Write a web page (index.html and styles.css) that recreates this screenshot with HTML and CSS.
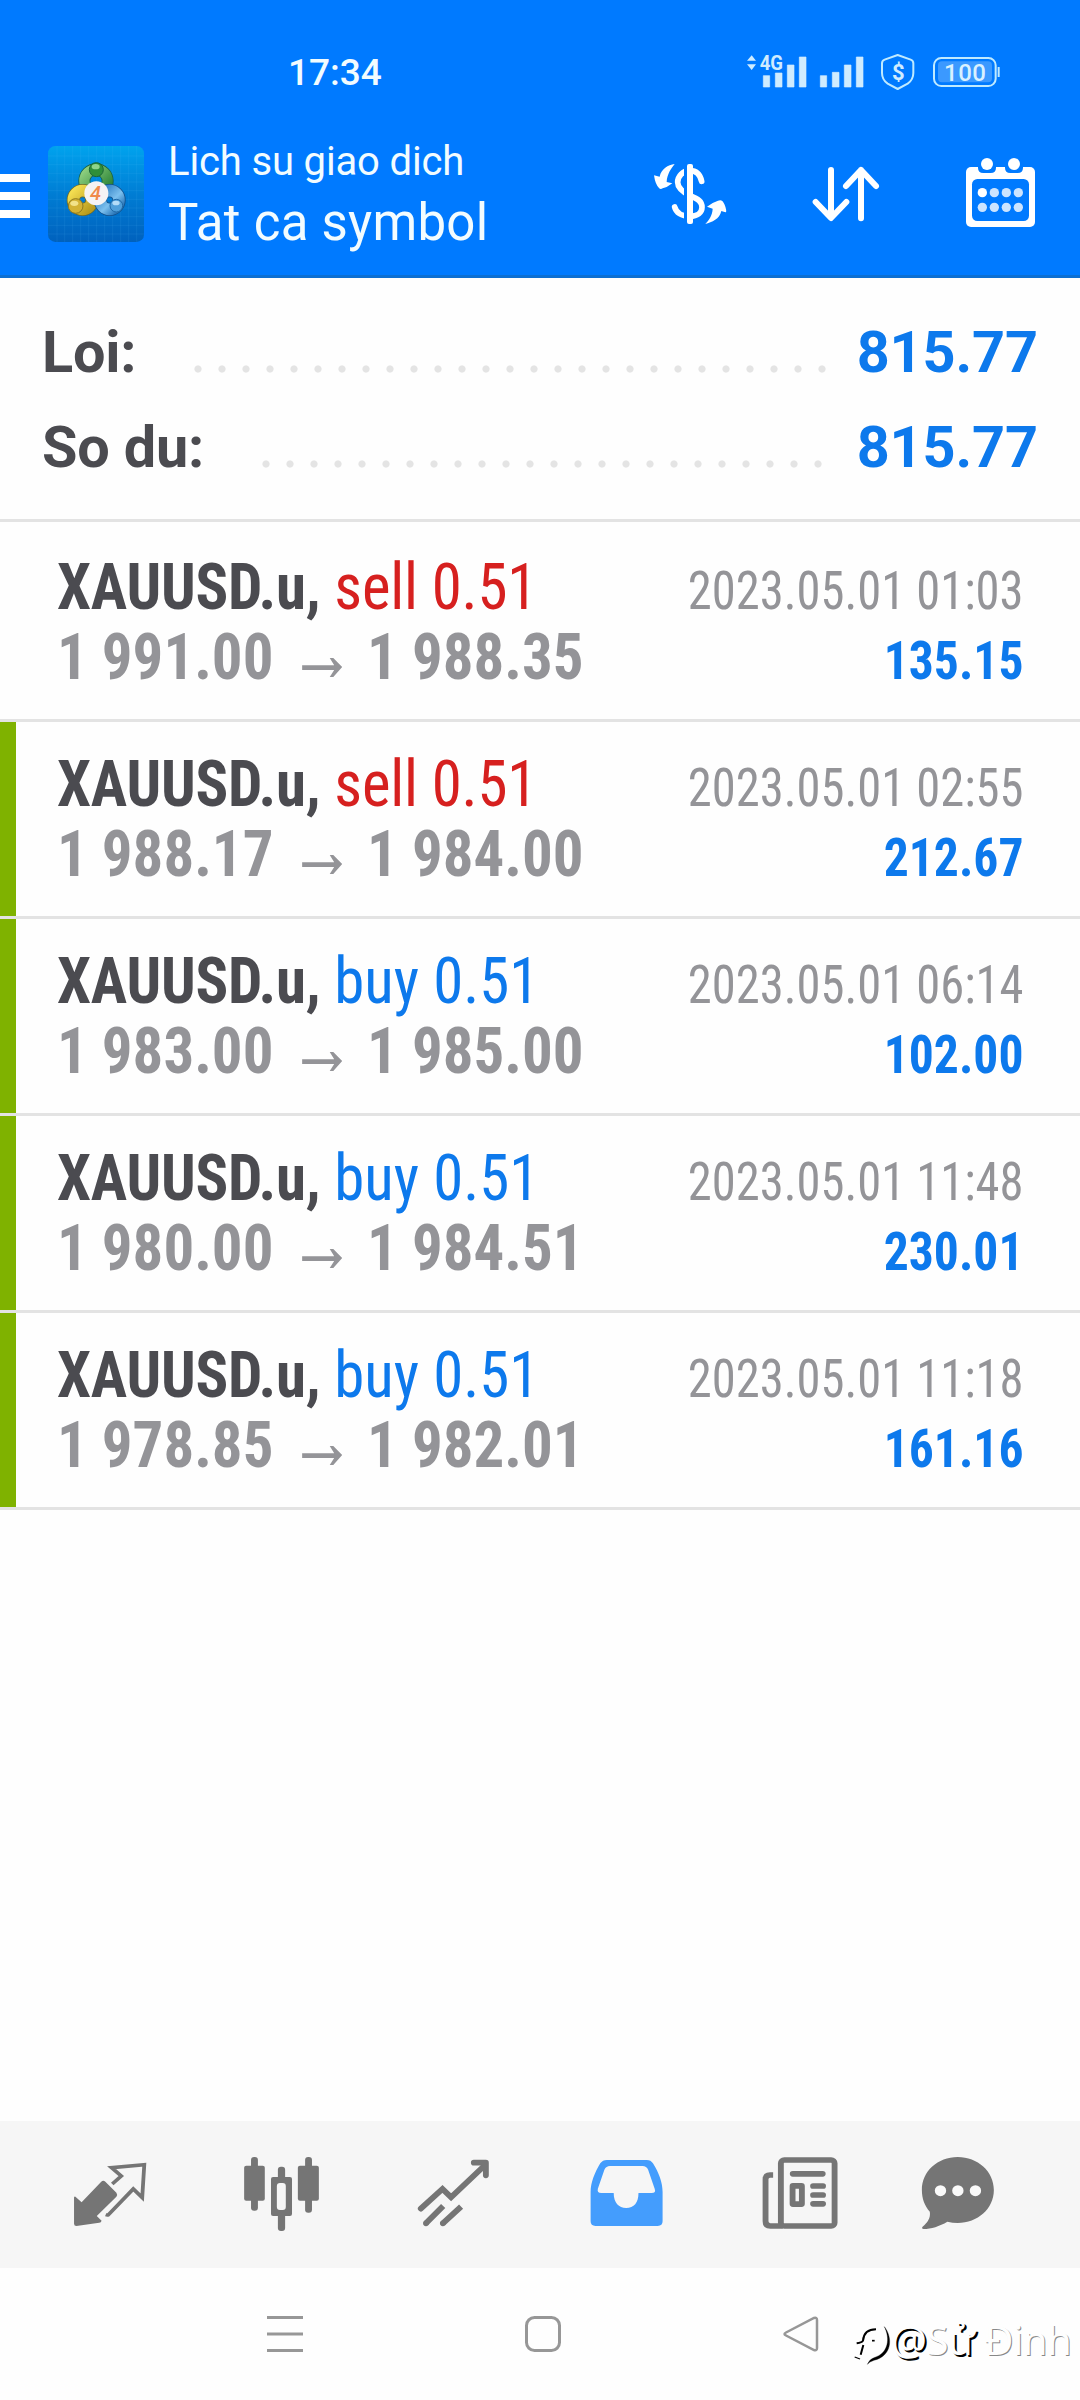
FILE: index.html
```html
<!DOCTYPE html>
<html lang="vi">
<head>
<meta charset="utf-8">
<title>Lich su giao dich</title>
<link rel="stylesheet" href="styles.css">
</head>
<body>
<header class="header">
  <div class="status">
    <span class="clock">17:34</span>
    <svg class="status-icons" viewBox="0 0 900 180">
      <g fill="#cfecff">
        <path d="M21 47h27L35 31zM21 58h27L35 75z"/>
        <path d="M70 92h19v34H70zM106 84h20v42h-20zM142 60h20v66h-20zM178 36h20v90h-20zM241 92h19v34h-19zM277 82h20v44h-20zM313 60h20v66h-20zM349 36h20v90h-20z" stroke="#cfecff" stroke-width="2" stroke-linejoin="round"/>
        <text x="59" y="76" font-size="60" font-weight="700" textLength="70" lengthAdjust="spacingAndGlyphs">4G</text>
        <text x="456" y="104" font-size="66" font-weight="700">$</text>
      </g>
      <rect x="594" y="49" width="162" height="63" rx="12" fill="#3b99ff"/>
      <text x="612" y="108" font-size="72" fill="#d9f1ff" font-weight="500" textLength="126">100</text>
      <g fill="none" stroke="#bfeaff" stroke-width="6">
        <path d="M473 30L512 44Q520 47 520 55V84Q520 104 503 116L473 132L443 116Q426 104 426 84V55Q426 47 434 44Z" stroke-linejoin="round"/>
        <rect x="582" y="39" width="185" height="84" rx="22"/>
        <path d="M776 66v30"/>
      </g>
    </svg>
  </div>
  <div class="toolbar">
    <svg class="menu" viewBox="0 120 48 155" fill="#fff"><path d="M0 174h30v8H0zM0 192h30v8H0zM0 210h30v8H0z"/></svg>
    <svg class="logo" viewBox="54 -30 288 465">
      <defs>
        <linearGradient id="tile" x1="0" y1="0" x2="0" y2="1"><stop offset="0" stop-color="#00a3ee"/><stop offset=".5" stop-color="#007dd4"/><stop offset="1" stop-color="#0061bd"/></linearGradient>
        <linearGradient id="gr" x1="0" y1="0" x2="1" y2="1"><stop offset="0" stop-color="#8fd080"/><stop offset="1" stop-color="#237d30"/></linearGradient>
        <linearGradient id="ye" x1="0" y1="0" x2="1" y2="1"><stop offset="0" stop-color="#f3dd50"/><stop offset="1" stop-color="#b89a1c"/></linearGradient>
        <linearGradient id="bl" x1="0" y1="0" x2="1" y2="1"><stop offset="0" stop-color="#2f7fc4"/><stop offset=".6" stop-color="#7cc0ee"/><stop offset="1" stop-color="#2b78bb"/></linearGradient>
      </defs>
      <rect x="54" y="48" width="288" height="288" rx="22" fill="url(#tile)"/>
      <path d="M81 48v288M104 48v288M128 48v288M152 48v288M176 48v288M200 48v288M224 48v288M248 48v288M272 48v288M296 48v288M320 48v288M54 78h288M54 104h288M54 130h288M54 156h288M54 182h288M54 208h288M54 234h288M54 260h288M54 286h288M54 312h288" stroke="#5cc4ff" stroke-opacity=".16" stroke-width="2"/>
      <g fill="none">
        <circle cx="198" cy="153" r="35" stroke="#1c6140" stroke-width="36"/>
        <circle cx="198" cy="153" r="35" stroke="url(#gr)" stroke-width="31"/>
        <circle cx="158" cy="210" r="28" stroke="#6b6a2a" stroke-width="40"/>
        <circle cx="158" cy="210" r="28" stroke="url(#ye)" stroke-width="35"/>
        <circle cx="239" cy="210" r="28" stroke="#14508a" stroke-width="40"/>
        <circle cx="239" cy="210" r="28" stroke="url(#bl)" stroke-width="35"/>
      </g>
      <circle cx="199" cy="119" r="21" fill="#2f8f3a" stroke="#1c6636" stroke-width="3"/>
      <ellipse cx="197" cy="110" rx="12" ry="8" fill="#8fd48a"/>
      <circle cx="137" cy="228" r="22" fill="#d3b234" stroke="#8b7820" stroke-width="3"/>
      <ellipse cx="133" cy="220" rx="12" ry="8" fill="#f2e28a"/>
      <circle cx="259" cy="227" r="19" fill="#4f9fda" stroke="#1f68a6" stroke-width="3"/>
      <ellipse cx="258" cy="219" rx="11" ry="7" fill="#b3dcf8"/>
      <circle cx="199" cy="190" r="36" fill="#f5f3f4"/>
      <text x="180" y="211" font-size="60" font-weight="500" font-style="italic" fill="#f08a4a">4</text>
    </svg>
    <div class="titles">
      <div class="subtitle">Lich su giao dich</div>
      <h1 class="title">Tat ca symbol</h1>
    </div>
    <svg class="action" width="140" viewBox="0 0 420 465">
      <g transform="translate(60 90)">
        <path d="M185 94C180 72 168 62 150 62C128 62 113 79 113 97C113 115 128 126 150 137C174 147 186 154 186 172C186 188 172 199 150 199C124 199 108 187 104 171" fill="none" stroke="#fff" stroke-width="17" stroke-linecap="round"/>
        <path d="M132 40h10v184h-10z" fill="#007aff"/>
        <rect x="141" y="42" width="18" height="180" rx="6" fill="#fff"/>
        <path d="M104 42C84 45 64 56 59 80L42 76Q46 104 57 114Q61 119 68 115Q82 112 97 100L80 96C81 72 94 55 104 42ZM196 222C216 216 239 208 244 183L256 187Q260 188 258 178Q254 160 247 153Q242 149 234 152Q215 158 201 170L218 176C217 196 207 210 196 222Z" fill="#fff"/>
      </g>
    </svg>
    <svg class="action" width="160" viewBox="420 270 480 465" fill="none" stroke="#fff" stroke-width="18" stroke-linecap="round" stroke-linejoin="round"><path d="M633 420v143M587 516l46 48 46-48M723 565V420M678 468l45-48 45 48"/></svg>
    <svg class="action" width="160" viewBox="900 270 480 465">
      <rect x="1038" y="411" width="207" height="180" rx="15" fill="#fff"/>
      <path d="M1074 405v8q0 16 16 16h22q16 0 16-16v-8zM1155 405v8q0 16 16 16h22q16 0 16-16v-8z" fill="#007aff"/>
      <rect x="1056" y="447" width="171" height="126" rx="16" fill="#007aff"/>
      <g fill="#fff"><circle cx="1101" cy="402" r="18"/><circle cx="1182" cy="402" r="18"/><circle cx="1087" cy="488" r="14"/></g>
      <g fill="#cce4ff"><circle cx="1123" cy="488" r="14"/><circle cx="1159" cy="488" r="14"/><circle cx="1195" cy="488" r="14"/><circle cx="1087" cy="532" r="14"/><circle cx="1123" cy="532" r="14"/><circle cx="1159" cy="532" r="14"/><circle cx="1195" cy="532" r="14"/></g>
    </svg>
  </div>
</header>

<section class="summary">
  <div class="total"><span>Loi:</span><i class="dots"></i><b class="sum">815.77</b></div>
  <div class="total"><span>So du:</span><i class="dots"></i><b class="sum">815.77</b></div>
</section>

<main class="deals">
  <article class="deal">
    <div class="left"><div><b>XAUUSD.u,</b> <span class="sell">sell 0.51</span></div><div class="prices">1 991.00<svg class="arrow" viewBox="0 0 45 20"><path d="M0 7.500h36L31 0h4L45 9.500 35 20h-4L36 12.500H0z"/></svg>1 988.35</div></div>
    <div class="right"><div class="date">2023.05.01 01:03</div><div class="profit">135.15</div></div>
  </article>
  <article class="deal marked">
    <div class="left"><div><b>XAUUSD.u,</b> <span class="sell">sell 0.51</span></div><div class="prices">1 988.17<svg class="arrow" viewBox="0 0 45 20"><path d="M0 7.500h36L31 0h4L45 9.500 35 20h-4L36 12.500H0z"/></svg>1 984.00</div></div>
    <div class="right"><div class="date">2023.05.01 02:55</div><div class="profit">212.67</div></div>
  </article>
  <article class="deal marked">
    <div class="left"><div><b>XAUUSD.u,</b> <span class="buy">buy 0.51</span></div><div class="prices">1 983.00<svg class="arrow" viewBox="0 0 45 20"><path d="M0 7.500h36L31 0h4L45 9.500 35 20h-4L36 12.500H0z"/></svg>1 985.00</div></div>
    <div class="right"><div class="date">2023.05.01 06:14</div><div class="profit">102.00</div></div>
  </article>
  <article class="deal marked">
    <div class="left"><div><b>XAUUSD.u,</b> <span class="buy">buy 0.51</span></div><div class="prices">1 980.00<svg class="arrow" viewBox="0 0 45 20"><path d="M0 7.500h36L31 0h4L45 9.500 35 20h-4L36 12.500H0z"/></svg>1 984.51</div></div>
    <div class="right"><div class="date">2023.05.01 11:48</div><div class="profit">230.01</div></div>
  </article>
  <article class="deal marked">
    <div class="left"><div><b>XAUUSD.u,</b> <span class="buy">buy 0.51</span></div><div class="prices">1 978.85<svg class="arrow" viewBox="0 0 45 20"><path d="M0 7.500h36L31 0h4L45 9.500 35 20h-4L36 12.500H0z"/></svg>1 982.01</div></div>
    <div class="right"><div class="date">2023.05.01 11:18</div><div class="profit">161.16</div></div>
  </article>
</main>

<nav class="tabs">
  <svg viewBox="0 11 180 147"><g transform="scale(.34435 .33333)" fill="#757575">
    <path d="M219 260L237 277L294 215Q300 210 306 215L338 248Q342 254 338 260L281 318L295 332Q294 338 288 338L222 348Q215 348 215 341V262Q216 259 219 260Z"/>
    <path d="M326 222L352 198L324 173L419 164L413 263L387 237L315 314Q312 316 307 314" fill="none" stroke="#757575" stroke-width="11" stroke-linejoin="miter"/>
  </g></svg>
  <svg viewBox="180 11 180 147"><g transform="scale(.34435 .33333)" fill="#757575">
    <rect x="729" y="141" width="20" height="161" rx="9"/><rect x="709" y="167" width="60" height="105" rx="6"/>
    <rect x="886" y="141" width="20" height="167" rx="9"/><rect x="865" y="167" width="61" height="105" rx="6"/>
    <rect x="807" y="170" width="21" height="193" rx="9"/><rect x="787" y="201" width="61" height="117" rx="6"/><rect x="804" y="219" width="26" height="81" rx="9" fill="#f6f6f6"/>
  </g></svg>
  <svg viewBox="360 11 180 147"><g transform="scale(.34435 .33333)" fill="none" stroke="#757575" stroke-width="17" stroke-linejoin="miter">
    <path d="M1222 296L1285 237L1310 262L1408 166" stroke-linecap="round"/><path d="M1376 158H1411V196" stroke-linecap="round" stroke-linejoin="round"/><path d="M1237 340L1287 288M1286 340L1339 290"/><path d="M1237 340h.1M1286 340h.1" stroke-linecap="round"/>
  </g></svg>
  <svg viewBox="0 11 180 147"><g transform="scale(.34435 .33333)">
    <path fill="#449dfd" fill-rule="evenodd" d="M194 150H310Q322 150 328 160C345 188 356 218 356 246V334Q356 348 342 348H161Q147 348 147 334V246C147 218 159 188 175 160Q182 150 194 150ZM203 168Q192 168 187 179L168 236Q165 249 178 249H214C214 278 229 294 250 294C273 294 286 278 286 249H324Q338 249 333 236L314 179Q309 168 298 168Z"/>
  </g></svg>
  <svg viewBox="180 11 180 147"><g transform="scale(.34435 .33333)" fill="none" stroke="#757575" stroke-width="17">
    <path d="M677 195H668Q655 195 655 208V334Q655 348 669 348H705"/><rect x="699.500" y="150" width="156" height="198" rx="10"/>
    <path d="M734 191.500H821M793 228H822M793 255H822M793 281.500H822" stroke-linecap="round"/><rect x="733.500" y="227.500" width="27" height="55" rx="1"/>
  </g></svg>
  <svg viewBox="360 11 180 147"><g transform="scale(.34435 .33333)">
    <path fill="#757575" d="M1213 141C1271 141 1318 184 1318 240C1318 296 1271 339 1213 339Q1198 339 1183 335C1160 349 1136 357 1114 357Q1107 355 1111 350C1125 338 1135 324 1132 305C1117 288 1109 266 1109 240C1109 184 1155 141 1213 141Z"/>
    <g fill="#fafafa"><circle cx="1163" cy="242" r="16.500"/><circle cx="1213.500" cy="242" r="16.500"/><circle cx="1264.500" cy="242" r="16.500"/></g>
  </g></svg>
</nav>

<footer class="system">
  <svg viewBox="0 0 1080 132" fill="none" stroke="#979797" stroke-width="3">
    <path d="M267 49.500h36M267 66h36M267 82.500h36"/>
    <rect x="526.500" y="49.500" width="33" height="33" rx="8"/>
    <path d="M786 67.500L814 82Q817 83 817 80V52Q817 49 814 50L786 64.500Q783 66 786 67.500Z" stroke-width="2.500"/>
    <g transform="translate(840 42) scale(.33333)" stroke="#000" stroke-linejoin="round">
      <path d="M50 100Q66 98 69 92Q72 58 108 58M70 105L62 134" stroke-width="6"/>
      <path d="M44 141L60 147" stroke-width="4"/>
      <path d="M133 50C151 85 146 130 102 143Q88 148 82 163Q88 155 102 151C155 138 160 85 133 50Z" fill="#000" stroke-width="1"/>
      <path d="M96 92h8" stroke-width="5"/>
    </g>
  </svg>
  <span class="watermark"><span class="heavy">@</span>S<span class="heavy">ử</span> Đinh</span>
</footer>
</body>
</html>
```
FILE: styles.css
```css
* { box-sizing: border-box; margin: 0; padding: 0; }
body {
  width: 1080px;
  height: 2400px;
  display: flex;
  flex-direction: column;
  background: #fefefe;
  font-family: Roboto, "Noto Sans", sans-serif;
  overflow: hidden;
}
svg { display: block; flex: none; }
svg text { font-family: Roboto, sans-serif; }

.header { height: 278px; background: #007aff; border-bottom: 3px solid #0c6fd2; color: #f2fcff; }
.status { height: 120px; display: flex; padding-left: 288px; }
.clock { width: 452px; padding-top: 50px; font-size: 37px; line-height: 46px; font-weight: 500; }
.status-icons { width: 300px; height: 60px; margin-top: 45px; }
.toolbar { height: 155px; display: flex; }
.menu { width: 48px; height: 155px; }
.logo { width: 96px; height: 155px; }
.titles { width: 476px; padding: 12px 0 0 24px; white-space: nowrap; }
.subtitle { font-size: 40px; line-height: 60px; letter-spacing: -.15px; }
.title { font-size: 51px; line-height: 61px; font-weight: 400; letter-spacing: .25px; }
.action { height: 155px; }

.summary { height: 244px; padding: 27px 42px 0 42px; border-bottom: 3px solid #e3e3e3; flex: none; }
.total { display: flex; height: 95px; line-height: 95px; font-size: 57.6px; font-weight: 700; color: #4b4b50; }
.total > span { letter-spacing: -.2px; }
.dots {
  flex: 1;
  margin: 0 21px 0 50px;
  background: radial-gradient(circle at 12px 64px, #e4e4e4 3.2px, transparent 4px) 0 0 / 24px 95px repeat-x;
}
.sum { color: #0d79ec; font-weight: 660; letter-spacing: -.1px; }

.deals { flex: 1; padding-top: 3px; }
.deal {
  position: relative;
  height: 197px;
  display: flex;
  justify-content: space-between;
  padding: 27px 57px 0;
  border-bottom: 3px solid #e3e3e3;
  font-family: "Roboto Condensed", Roboto, sans-serif;
  line-height: 70px;
  white-space: nowrap;
}
.marked::before { content: ""; position: absolute; left: 0; top: 0; bottom: 0; width: 16px; background: #7fb200; }
.left { font-size: 65px; color: #4b4b50; transform: scaleX(.937); transform-origin: left; }
.left b { letter-spacing: -.28px; }
.prices { display: flex; font-weight: 700; color: #949498; }
.arrow { width: 44px; height: 19px; margin: 36px 26px 0 30px; fill: #949498; }
.sell { color: #d6201f; letter-spacing: -.2px; }
.buy { color: #0d79ec; }
.right { font-size: 53px; text-align: right; padding-top: 4px; }
.date { color: #949498; transform: scaleX(.916); transform-origin: right; }
.profit { font-weight: 700; color: #0d79ec; transform: scaleX(.936); transform-origin: right; }

.tabs { height: 147px; display: grid; grid-template-columns: repeat(6, 180px); background: #f6f6f6; }
.tabs svg { width: 180px; height: 147px; }

.system { position: relative; height: 132px; }
.watermark {
  position: absolute;
  left: 891px;
  top: 45px;
  font: 40px/54px "Noto Sans", sans-serif;
  letter-spacing: -.5px;
  white-space: nowrap;
  color: #fefefe;
  text-shadow: 1px 1px 0 #888;
}
.heavy { text-shadow: 2px 2px 0 #000; }
```
